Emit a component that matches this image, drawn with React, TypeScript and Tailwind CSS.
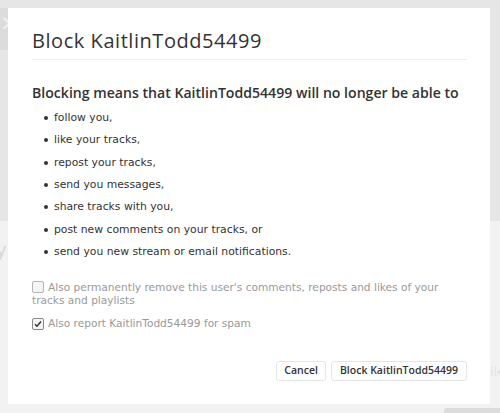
import React from 'react'

const items = [
  'follow you,',
  'like your tracks,',
  'repost your tracks,',
  'send you messages,',
  'share tracks with you,',
  'post new comments on your tracks, or',
  'send you new stream or email notifications.',
]

const App = () => {
  return (
    <div className='relative w-[500px] h-[413px] overflow-hidden bg-[#f2f2f2]'>
      {/* page behind the modal */}
      <div className='absolute left-0 top-0 w-full h-[221px] bg-[#e6e6e6]' />
      <div className='absolute left-0 top-[8px] w-[8px] h-[42px] bg-[#dcdcdc] text-[#f2f2f2] text-[22px] leading-[30px] font-["DejaVu_Sans",sans-serif]'>×</div>
      <div className='absolute left-[-4px] top-[236px] text-[18px] text-[#d6d6d6] font-["DejaVu_Sans",sans-serif]'>y</div>
      <div className='absolute left-[490px] top-[362px] text-[13px] text-[#e2e2e2] font-["DejaVu_Sans",sans-serif]'>ile</div>
      <div className='absolute left-[444px] top-[408px] w-[70px] h-[10px] rounded-[3px] bg-[#dcdcdc]' />

      <div className='relative pl-[8px] pt-[8px]'>
        <div className='w-[482px] h-[396px] bg-white pl-[24px] pr-[23px] pt-[21px] font-["Open_Sans",sans-serif]'>
          <h1 className='text-[20px] leading-[24px] text-[#333] tracking-[0.55px] pb-[6px] border-b border-[#eeeeee]'>
            Block KaitlinTodd54499
          </h1>

          <h2 className='mt-[23px] text-[14.1px] leading-[20px] font-semibold text-[#333] whitespace-nowrap'>
            Blocking means that KaitlinTodd54499 will no longer be able to
          </h2>

          <ul className='mt-[4px] pl-[12px] font-["DejaVu_Sans",sans-serif] text-[10.8px] text-[#333]'>
            {items.map((t) => (
              <li key={t} className='flex items-center h-[22.3px]'>
                <span className='w-[4px] h-[4px] rounded-full bg-[#333] mr-[6px]' />
                <span>{t}</span>
              </li>
            ))}
          </ul>

          <div className='mt-[18px] font-["DejaVu_Sans",sans-serif] text-[10.6px] leading-[13px] text-[#999]'>
            <label className='block'>
              <span className='inline-block align-[-2px] w-[12px] h-[12px] border border-[#b5b5b5] rounded-[2px] bg-[#f4f4f4] mr-[4px]' />
              Also permanently remove this user's comments, reposts and likes of your tracks and playlists
            </label>
            <label className='flex items-center mt-[10px]'>
              <span className='flex items-center justify-center w-[12px] h-[12px] border border-[#888] rounded-[2px] bg-[#f4f4f4] mr-[4px]'>
                <svg width='8' height='8' viewBox='0 0 8 8'>
                  <path d='M1 4.2 L3 6.2 L7 1.5' fill='none' stroke='#333' strokeWidth='1.5' />
                </svg>
              </span>
              Also report KaitlinTodd54499 for spam
            </label>
          </div>

          <div className='mt-[31px] flex justify-end gap-[5px] font-["Open_Sans",sans-serif]'>
            <button className='h-[20px] px-[7px] border border-[#e5e5e5] rounded-[3px] bg-white text-[10.5px] font-semibold text-[#333]'>
              Cancel
            </button>
            <button className='h-[20px] px-[8px] border border-[#e5e5e5] rounded-[3px] bg-white text-[10.5px] font-semibold text-[#333]'>
              Block KaitlinTodd54499
            </button>
          </div>
        </div>
      </div>
    </div>
  )
}

export default App
